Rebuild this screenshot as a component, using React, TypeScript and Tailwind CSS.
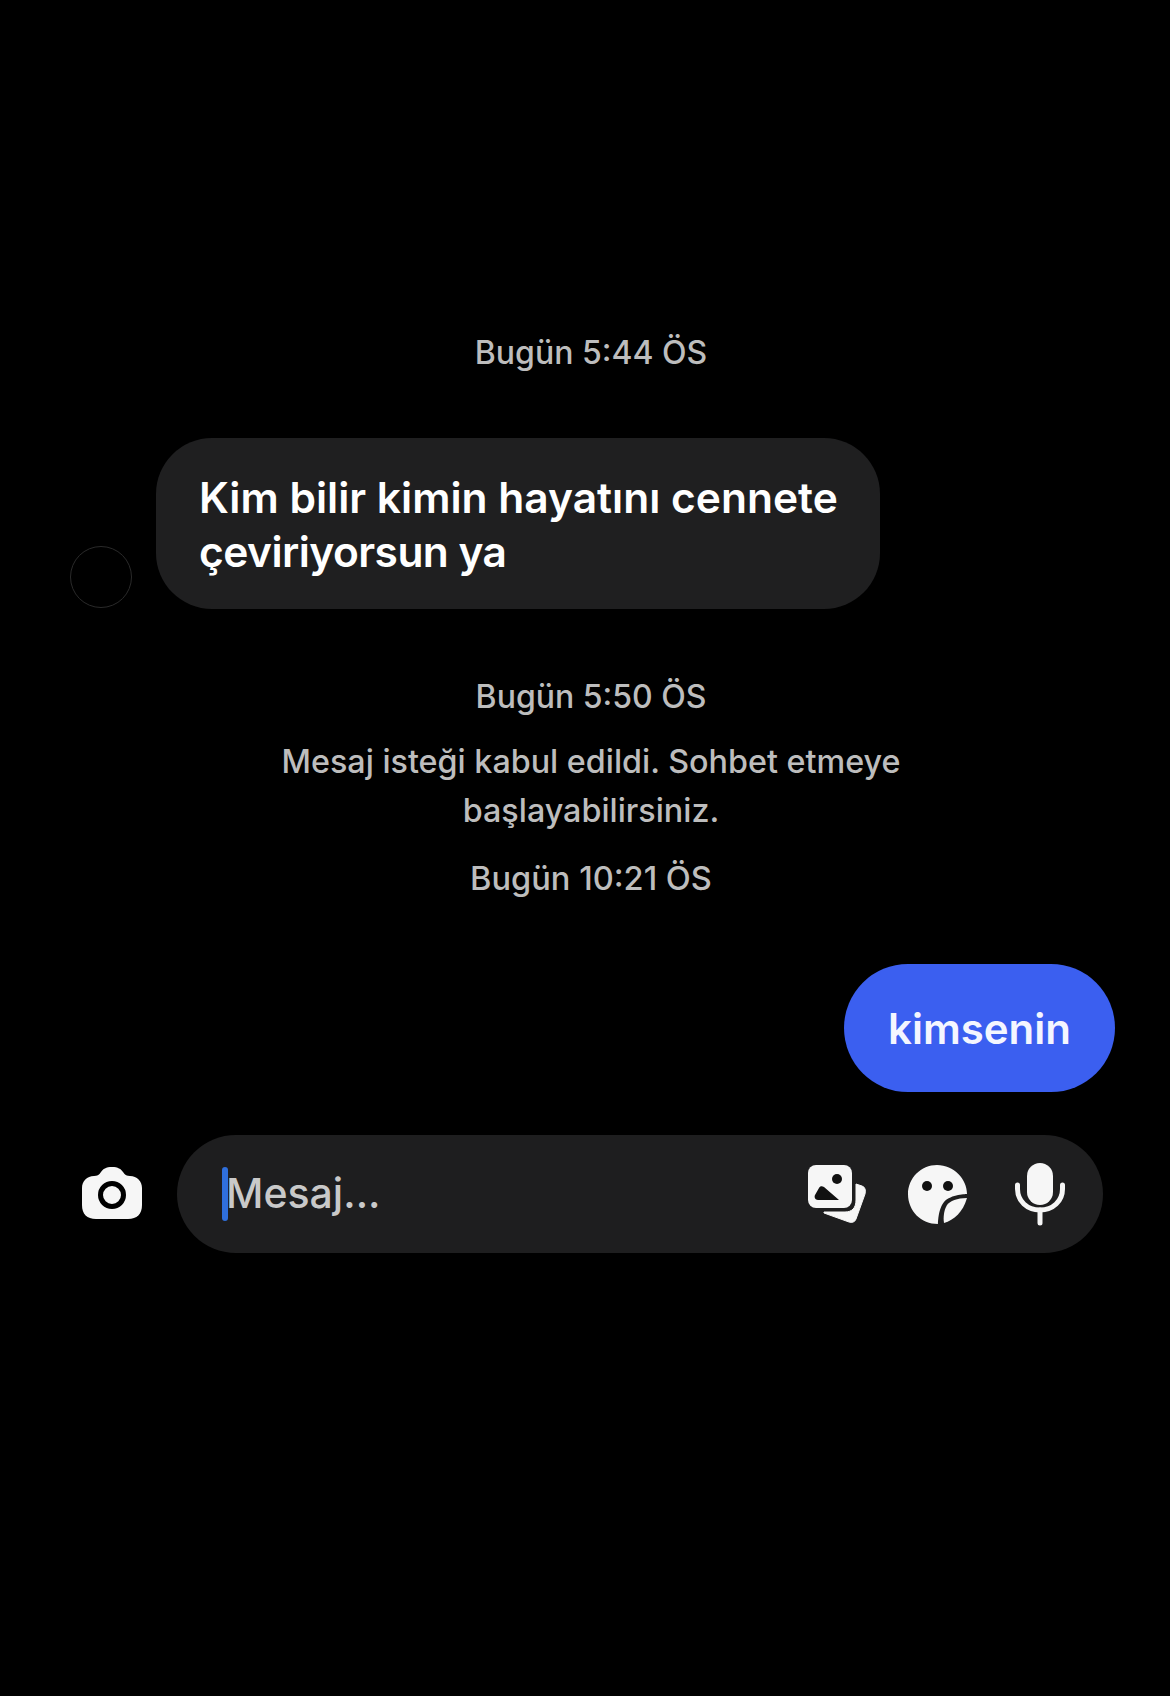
const FONT = "font-['Inter',sans-serif]";

function CameraIcon() {
  return (
    <svg width="60" height="52" viewBox="0 0 60 52" className="mb-[3px] shrink-0">
      <path
        d="M12 9 C15 9 17 8 19 5 C21 2 24 0 30 0 C36 0 39 2 41 5 C43 8 45 9 48 9 C55 9 60 14 60 21 L60 38 C60 47 55 52 46 52 L14 52 C5 52 0 47 0 38 L0 21 C0 14 5 9 12 9 Z"
        fill="#f6f6f6"
      />
      <circle cx="30" cy="28" r="11.5" fill="none" stroke="#000" strokeWidth="5" />
    </svg>
  );
}

function GalleryIcon() {
  return (
    <svg width="60" height="60" viewBox="0 0 60 60">
      <path d="M17 49 L42 58 C45 59 48 58 49 55 L58 30 C59 26 58 23 55 22 L49 20 L49 36 C49 44 45 48 38 48 L17 48 Z" fill="#f6f6f6" stroke="#f6f6f6" strokeWidth="1" strokeLinejoin="round" />
      <rect x="1" y="1" width="44" height="43" rx="8" fill="#f6f6f6" />
      <circle cx="30" cy="15" r="5" fill="#111" />
      <path d="M8 31 L12 24 C13 22 15 22 17 23 L32 36 L11 36 C8 36 7 33 8 31 Z" fill="#111" />
    </svg>
  );
}

function StickerIcon() {
  return (
    <svg width="61" height="61" viewBox="0 0 61 61">
      <path d="M30 1 C47 1 60 15 60 30 C60 30 44 30 37 38 C31 45 31 60 31 60 C14 60 1 47 1 30 C1 14 14 1 30 1 Z" fill="#f6f6f6" />
      <path d="M60 34 C50 34 43 37 40 41 C37 46 36 53 37 59 C47 56 56 48 60 34 Z" fill="#f6f6f6" />
      <circle cx="20" cy="22" r="5" fill="#111" />
      <circle cx="41" cy="22" r="5" fill="#111" />
    </svg>
  );
}

function MicIcon() {
  return (
    <svg width="50" height="63" viewBox="0 0 50 63">
      <rect x="12" y="0" width="26" height="42" rx="13" fill="#f6f6f6" />
      <path d="M2.5 22 L2.5 26 C2.5 38 12 47 25 47 C38 47 47.5 38 47.5 26 L47.5 22" fill="none" stroke="#f6f6f6" strokeWidth="5" strokeLinecap="round" />
      <path d="M25 47 L25 60" fill="none" stroke="#f6f6f6" strokeWidth="5" strokeLinecap="round" />
    </svg>
  );
}

function Stamp({ text, className }: { text: string; className: string }) {
  return (
    <div className={`pl-[12px] text-center leading-[36px] font-medium text-[#bdbdbd] ${className}`}>{text}</div>
  );
}

export default function App() {
  return (
    <div className={`flex min-h-[1696px] flex-col bg-black ${FONT}`}>
      <Stamp text="Bugün 5:44 ÖS" className="mt-[335px] text-[32px]" />

      <div className="mt-[67px] flex items-end pl-[70px]">
        <div className="mb-[1px] h-[62px] w-[62px] rounded-full border border-[#2a2a2a] bg-black" />
        <div className="ml-[24px] w-[724px] rounded-[56px] bg-[#1f1f20] px-[43px] pt-[33px] pb-[30px] text-[42.5px] leading-[54px] font-semibold whitespace-nowrap text-white">
          Kim bilir kimin hayatını cennete
          <br />
          <span className="tracking-[-0.55px]">çeviriyorsun ya</span>
        </div>
      </div>

      <Stamp text="Bugün 5:50 ÖS" className="mt-[70px] text-[32px]" />
      <div className="mt-[22px] pl-[12px] text-center text-[32.3px] leading-[49px] font-medium text-[#bdbdbd]">
        Mesaj isteği kabul edildi. Sohbet etmeye
        <br />
        başlayabilirsiniz.
      </div>
      <Stamp text="Bugün 10:21 ÖS" className="mt-[25px] text-[32.6px]" />

      <div className="mt-[68px] flex justify-end pr-[55px]">
        <div className="flex h-[128px] w-[271px] items-center justify-center rounded-[64px] bg-[#3b5ff0] text-[42px] font-semibold text-[#f4f6ff]">
          kimsenin
        </div>
      </div>

      <div className="mt-[43px] flex items-center pl-[82px]">
        <CameraIcon />
        <div className="ml-[35px] flex h-[118px] w-[926px] items-center rounded-[59px] bg-[#1e1e1f] pl-[45px]">
          <div className="h-[54px] w-[6px] rounded-full bg-[#2f6fdc]" />
          <div className="ml-[-2px] text-[41px] font-medium text-[#c9c9c9]">Mesaj...</div>
          <div className="mr-[38px] ml-auto flex items-center">
            <GalleryIcon />
            <div className="ml-[40px]">
              <StickerIcon />
            </div>
            <div className="ml-[47px]">
              <MicIcon />
            </div>
          </div>
        </div>
      </div>
    </div>
  );
}
